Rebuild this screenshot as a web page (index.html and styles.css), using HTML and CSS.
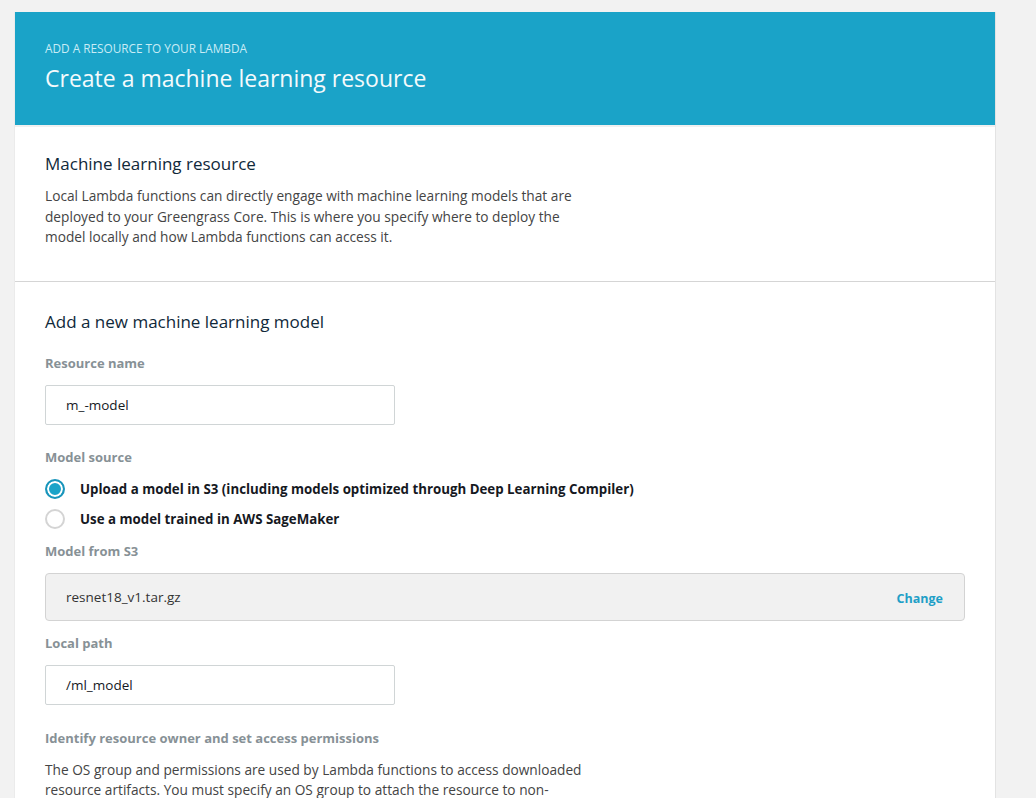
FILE: index.html
```html
<!DOCTYPE html>
<html>
<head>
<meta charset="utf-8">
<link rel="stylesheet" href="styles.css">
</head>
<body>
<div class="card">
  <header class="hero">
    <div class="eyebrow">ADD A RESOURCE TO YOUR LAMBDA</div>
    <h1 class="title">Create a machine learning resource</h1>
  </header>
  <section class="section intro">
    <h2 class="heading">Machine learning resource</h2>
    <p class="text">Local Lambda functions can directly engage with machine learning models that are deployed to your Greengrass Core. This is where you specify where to deploy the model locally and how Lambda functions can access it.</p>
  </section>
  <section class="section form">
    <h2 class="heading">Add a new machine learning model</h2>
    <div class="field f-name">
      <div class="label">Resource name</div>
      <div class="input">m_-model</div>
    </div>
    <div class="field f-source">
      <div class="label">Model source</div>
      <div class="radios">
        <div class="radio-row"><span class="radio checked"></span><span class="radio-label">Upload a model in S3 (including models optimized through Deep Learning Compiler)</span></div>
        <div class="radio-row"><span class="radio"></span><span class="radio-label">Use a model trained in AWS SageMaker</span></div>
      </div>
    </div>
    <div class="field f-s3">
      <div class="label">Model from S3</div>
      <div class="s3box"><span class="s3name">resnet18_v1.tar.gz</span><span class="change">Change</span></div>
    </div>
    <div class="field f-path">
      <div class="label">Local path</div>
      <div class="input">/ml_model</div>
    </div>
    <div class="field f-perm">
      <div class="label">Identify resource owner and set access permissions</div>
      <p class="text perm">The OS group and permissions are used by Lambda functions to access downloaded resource artifacts. You must specify an OS group to attach the resource to non-<br>root Lambda functions.</p>
    </div>
  </section>
</div>
</body>
</html>
```
FILE: styles.css
```css
html, body {
  margin: 0;
  padding: 0;
}
body {
  background: #f2f2f2;
  font-family: "Open Sans", "Noto Sans", sans-serif;
  padding: 12px 0 0 15px;
  height: 798px;
  overflow: hidden;
}
.card {
  width: 980px;
  background: #ffffff;
  box-shadow: 1px 0 0 #e3e3e3, -1px 0 0 #ebebeb;
}
.hero {
  background: #1aa3c8;
  padding: 29px 30px 32px;
  border-bottom: 2px solid #f0f0f0;
}
.eyebrow {
  font-size: 11.8px;
  line-height: 14px;
  color: #c9ecf6;
}
.title {
  margin: 8px 0 0;
  font-size: 23px;
  line-height: 30px;
  font-weight: 400;
  color: #f4fafc;
}
.section {
  padding: 0 30px;
}
.intro {
  padding-top: 25px;
  padding-bottom: 33px;
  border-bottom: 1px solid #d5d5d5;
}
.heading {
  margin: 0;
  font-size: 17px;
  line-height: 24px;
  font-weight: 400;
  color: #10293a;
}
.text {
  margin: 10px 0 0;
  width: 535px;
  font-size: 13.7px;
  line-height: 20.5px;
  color: #444444;
}
.form {
  padding-top: 28px;
}
.field {
  margin-top: 20px;
}
.f-name {
  margin-top: 20px;
}
.label {
  font-size: 13px;
  line-height: 18px;
  font-weight: 700;
  color: #879196;
}
.input {
  margin-top: 13px;
  box-sizing: border-box;
  width: 350px;
  height: 40px;
  border: 1px solid #d0d5d6;
  border-radius: 2px;
  padding: 0 20px;
  display: flex;
  align-items: center;
  font-size: 13.5px;
  color: #16191f;
}
.f-source {
  margin-top: 23px;
}
.radios {
  margin-top: 13px;
  display: flex;
  flex-direction: column;
  gap: 10px;
}
.radio-row {
  display: flex;
  align-items: center;
  gap: 15px;
  height: 20px;
}
.radio {
  box-sizing: border-box;
  width: 20px;
  height: 20px;
  border-radius: 50%;
  border: 2px solid #d4d4d4;
  background: #fff;
  flex: none;
}
.radio.checked {
  border-color: #1995bb;
  background: #1aa3c8;
  box-shadow: inset 0 0 0 2px #fff;
}
.radio-label {
  font-size: 13.3px;
  line-height: 20px;
  font-weight: 700;
  color: #16191f;
}
.f-s3 {
  margin-top: 13px;
}
.s3box {
  margin-top: 13px;
  box-sizing: border-box;
  height: 48px;
  background: #f1f1f1;
  border: 1px solid #d3d3d3;
  border-radius: 4px;
  padding: 0 21px 0 20px;
  display: flex;
  align-items: center;
  justify-content: space-between;
}
.s3name {
  font-size: 13.5px;
  color: #333333;
}
.change {
  font-size: 12.5px;
  font-weight: 700;
  color: #1f9fc7;
  padding-top: 3px;
}
.f-path {
  margin-top: 13px;
}
.f-perm {
  margin-top: 24px;
}
.perm {
  margin-top: 13px;
  width: 545px;
}
```
